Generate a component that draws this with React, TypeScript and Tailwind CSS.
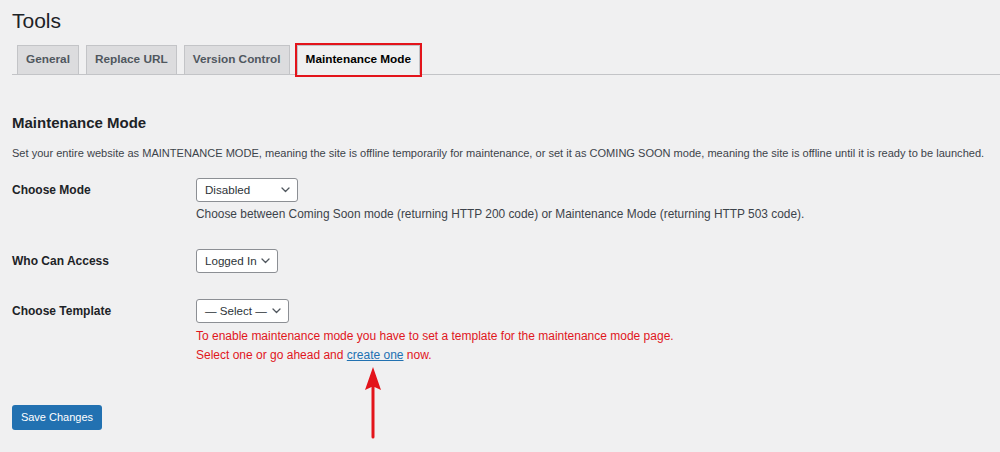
import React from "react";

const TABS = [
    { name: "General", active: false },
    { name: "Replace URL", active: false },
    { name: "Version Control", active: false },
    { name: "Maintenance Mode", active: true },
];

function Chevron() {
    return (
        <svg width="9" height="6" viewBox="0 0 9 6" className="shrink-0">
            <path d="M1 1l3.5 3.5L8 1" fill="none" stroke="#50575e" strokeWidth="1.3" strokeLinecap="round" strokeLinejoin="round" />
        </svg>
    );
}

function FakeSelect({ value, width }: { value: string; width: string }) {
    return (
        <div className={`${width} h-[24px] flex items-center justify-between gap-1 pl-2 pr-[7px] bg-white border border-[#8c8f94] rounded-[3px] text-[11.6px] text-[#2c3338] whitespace-nowrap`}>
            <span>{value}</span>
            <Chevron />
        </div>
    );
}

export default function App() {
    return (
        <div className="relative w-[1000px] h-[452px] overflow-hidden bg-[#f0f0f1] font-['Liberation_Sans',Arial,sans-serif] text-[#3c434a]">
            <div className="pl-3">
                {/* Page title */}
                <h1 className="pt-[8px] text-[21px] leading-[26px] text-[#1d2327]">Tools</h1>

                {/* Tabs */}
                <nav className="mt-[11px] flex items-end gap-[7px] pl-[5px] border-b border-[#c3c4c7]">
                    {TABS.map((tab) => (
                        <div
                            key={tab.name}
                            className={
                                tab.active
                                    ? "-mb-px h-[30px] flex items-center px-[8px] border border-[#c3c4c7] border-b-[#f0f0f1] bg-[#f0f0f1] text-[11.8px] font-bold text-black outline-2 outline-[#e3141b]"
                                    : "-mb-px h-[30px] flex items-center px-[8px] border border-[#c3c4c7] bg-[#dcdcde] text-[11.8px] font-bold text-[#50575e]"
                            }
                        >
                            {tab.name}
                        </div>
                    ))}
                </nav>

                {/* Section */}
                <h2 className="mt-[38px] text-[15px] leading-[20px] font-bold text-[#1d2327]">Maintenance Mode</h2>
                <p className="mt-[11px] text-[11.05px] leading-[18px] whitespace-nowrap">
                    Set your entire website as MAINTENANCE MODE, meaning the site is offline temporarily for maintenance, or set it as COMING SOON mode, meaning the site is offline until it is ready to be launched.
                </p>

                {/* Choose Mode */}
                <div className="mt-[16px] flex">
                    <div className="w-[184px] leading-[24px] text-[12px] font-bold text-[#1d2327]">Choose Mode</div>
                    <div>
                        <FakeSelect value="Disabled" width="w-[102px]" />
                        <p className="mt-[4px] text-[11.9px] leading-[16px]">
                            Choose between Coming Soon mode (returning HTTP 200 code) or Maintenance Mode (returning HTTP 503 code).
                        </p>
                    </div>
                </div>

                {/* Who Can Access */}
                <div className="mt-[27px] flex">
                    <div className="w-[184px] leading-[25px] text-[12px] font-bold text-[#1d2327]">Who Can Access</div>
                    <FakeSelect value="Logged In" width="w-[82px]" />
                </div>

                {/* Choose Template */}
                <div className="mt-[25px] flex">
                    <div className="w-[184px] leading-[24px] text-[12px] font-bold text-[#1d2327]">Choose Template</div>
                    <div>
                        <FakeSelect value="— Select —" width="w-[93px]" />
                        <div className="mt-[4px] text-[12px] leading-[19px] text-[#e0161d]">
                            <p>To enable maintenance mode you have to set a template for the maintenance mode page.</p>
                            <p>
                                Select one or go ahead and{" "}
                                <a href="#" className="text-[#2271b1] underline">create one</a>{" "}
                                now.
                            </p>
                        </div>
                    </div>
                </div>

                <button className="mt-[40px] h-[25px] w-[90px] rounded-[3px] bg-[#2271b1] text-[11px] text-white">
                    Save Changes
                </button>
            </div>

            {/* Annotation arrow */}
            <svg className="absolute left-[364px] top-[366px]" width="18" height="74" viewBox="0 0 18 74">
                <path d="M9 1L17 24L10.5 21V71a1.5 1.5 0 0 1-3 0V21L1 24Z" fill="#e3141b" />
            </svg>
        </div>
    );
}
